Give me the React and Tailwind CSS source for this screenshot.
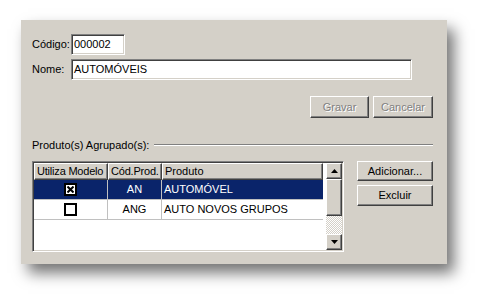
import React from 'react';

const sunken = 'border border-t-[#808080] border-l-[#808080] border-b-white border-r-white shadow-[inset_1px_1px_0_#404040,inset_-1px_-1px_0_#d4d0c8]';
const raised = 'border border-t-white border-l-white border-b-[#404040] border-r-[#404040] shadow-[inset_-1px_-1px_0_#808080] bg-[#d4d0c8]';

const Button = ({ label, width, height = 'h-[22px]', disabled }) => (
    <div className={`${raised} ${width} ${height} flex items-center justify-center`}>
        <span className={disabled ? 'text-[#808080] [text-shadow:1px_1px_0_#fff]' : 'text-black'}>{label}</span>
    </div>
);

const CheckBox = ({ checked }) => (
    <div className="w-[13px] h-[13px] bg-white border-2 border-black flex items-center justify-center">
        {checked && (
            <svg width="7" height="7" viewBox="0 0 7 7">
                <path d="M0.5 0.5 L6.5 6.5 M6.5 0.5 L0.5 6.5" stroke="#000" strokeWidth="2" />
            </svg>
        )}
    </div>
);

const Arrow = ({ up }) => (
    <svg width="7" height="4" viewBox="0 0 7 4">
        <path d={up ? 'M3.5 0 L7 4 L0 4 Z' : 'M0 0 L7 0 L3.5 4 Z'} fill="#000" />
    </svg>
);

const rows = [
    { checked: true, code: 'AN', name: 'AUTOMÓVEL', selected: true },
    { checked: false, code: 'ANG', name: 'AUTO NOVOS GRUPOS', selected: false },
];

const App = () => {
    return (
        <div className="w-[489px] h-[306px] bg-white overflow-hidden pt-[20px] pl-[21px] text-[11px] text-black font-['Liberation_Sans',Arial,sans-serif] leading-none">
            <div className="w-[426px] h-[244px] bg-[#d4d0c8] shadow-[7px_9px_14px_rgba(0,0,0,0.55)] pt-[14px] pl-[11px] pr-[14px] flex flex-col">
                {/* Código */}
                <div className="flex items-center h-[21px]">
                    <span className="w-[39px]">Código:</span>
                    <div className={`${sunken} w-[54px] h-[21px] bg-white flex items-center pl-[2px]`}>000002</div>
                </div>
                {/* Nome */}
                <div className="flex items-center h-[21px] mt-[4px]">
                    <span className="w-[39px]">Nome:</span>
                    <div className={`${sunken} w-[341px] h-[21px] bg-white flex items-center pl-[2px]`}>AUTOMÓVEIS</div>
                </div>

                <div className="flex justify-end gap-[4px] mt-[16px]">
                    <Button label="Gravar" width="w-[59px]" disabled />
                    <Button label="Cancelar" width="w-[60px]" disabled />
                </div>

                <div className="flex items-center h-[14px] mt-[20px]">
                    <span>Produto(s) Agrupado(s):</span>
                    <div className="flex-1 ml-[5px] border-t border-t-[#808080] border-b border-b-white" />
                </div>

                <div className="flex mt-[9px]">
                    <div className={`${sunken} w-[312px] h-[91px] bg-white p-[1px] flex`}>
                        <div className="w-[289px] flex flex-col">
                            <div className="flex h-[17px] whitespace-nowrap">
                                <div className={`${raised} w-[74px] flex items-center pl-[2px] overflow-hidden tracking-[-0.2px]`}>Utiliza Modelo</div>
                                <div className={`${raised} w-[54px] flex items-center pl-[2px] overflow-hidden tracking-[-0.2px]`}>Cód.Prod.</div>
                                <div className={`${raised} flex-1 flex items-center pl-[2px]`}>Produto</div>
                            </div>
                            {rows.map((r) => (
                                <div
                                    key={r.code}
                                    className={`flex h-[20px] border-b border-b-[#c0c0c0] ${r.selected ? 'bg-[#0a246a] text-white' : 'bg-white'}`}
                                >
                                    <div className="w-[74px] flex items-center justify-center border-r border-r-[#c0c0c0]">
                                        <CheckBox checked={r.checked} />
                                    </div>
                                    <div className="w-[54px] flex items-center justify-center border-r border-r-[#c0c0c0]">{r.code}</div>
                                    <div className="flex-1 flex items-center pl-[2px]">{r.name}</div>
                                </div>
                            ))}
                        </div>
                        <div className="w-[3px]" />
                        <div className="w-[16px] flex flex-col">
                            <div className={`${raised} h-[16px] flex items-center justify-center`}>
                                <Arrow up />
                            </div>
                            <div className={`${raised} h-[37px]`} />
                            <div className="flex-1 bg-[repeating-conic-gradient(#d4d0c8_0%_25%,#fff_0%_50%)] bg-[length:2px_2px]" />
                            <div className={`${raised} h-[16px] flex items-center justify-center`}>
                                <Arrow />
                            </div>
                        </div>
                    </div>

                    <div className="ml-[13px] flex flex-col gap-[4px]">
                        <Button label="Adicionar..." width="w-[76px]" height="h-[20px]" />
                        <Button label="Excluir" width="w-[76px]" height="h-[21px]" />
                    </div>
                </div>
            </div>
        </div>
    );
};

export default App;
